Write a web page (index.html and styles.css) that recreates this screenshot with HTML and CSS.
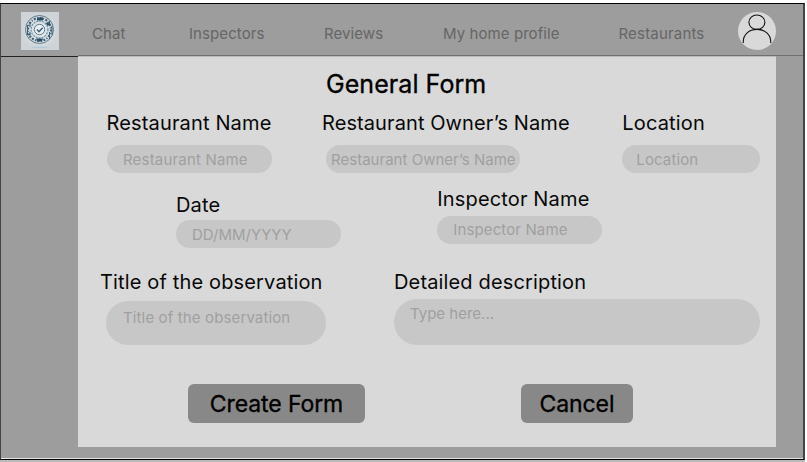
FILE: index.html
```html
<!DOCTYPE html>
<html lang="en">
<head>
<meta charset="utf-8">
<title>General Form</title>
<link rel="stylesheet" href="styles.css">
</head>
<body>
<div class="frame">
  <header class="topbar">
    <svg class="logo" viewBox="0 0 38 38">
      <defs><radialGradient id="g"><stop offset="0" stop-color="#e6ecee"/><stop offset="1" stop-color="#cdd3d6"/></radialGradient></defs>
      <rect width="38" height="38" fill="url(#g)"/>
      <ellipse cx="19" cy="35.3" rx="9" ry=".8" fill="#b3cbd9"/>
      <g fill="none" stroke="#3d6077">
        <circle cx="18.500" cy="17.500" r="14" stroke-width=".8"/>
        <circle cx="18.500" cy="17.500" r="11.500" stroke-width="2.200" stroke-dasharray="2 1.500 1 1.500"/>
        <circle cx="18.500" cy="17.500" r="8.400" stroke-width="1.200" stroke="#6b8fa5" stroke-dasharray="2 1"/>
        <circle cx="18.500" cy="17.500" r="5.200" stroke-width=".8" fill="#e8eff2"/>
        <path d="M6.500 13v10M9 10v5M9 20v6M28.500 9v5M31 14v9M28.500 20v7" stroke-width="1"/>
        <path d="M16 17.500l2 2.200 3.700-4" stroke-width="1.500"/>
      </g>
      <path d="M16 5.500h6v3h-6zM15 26.500h7l-1 3h-5zM26 10l3 2-2 2-2-2z" fill="#2a4e66"/>
    </svg>
    <nav class="nav">
      <a class="chat">Chat</a>
      <a class="inspectors">Inspectors</a>
      <a class="reviews">Reviews</a>
      <a class="profile">My home profile</a>
      <a class="restaurants">Restaurants</a>
    </nav>
    <svg class="avatar" viewBox="0 0 38 38">
      <circle cx="19" cy="19" r="19" fill="#d9d9d9"/>
      <g fill="none" stroke="#111" stroke-width="1.1">
        <ellipse cx="18.9" cy="10.2" rx="8" ry="7.2"/>
        <path d="M5.3 31v-1.500C5.300 22.500 11 17.400 19 17.400s13.700 5.100 13.700 12.100V31"/>
      </g>
    </svg>
  </header>
  <main class="panel">
    <h1>General Form</h1>
    <form>
      <div class="row row-one">
        <div class="field restaurant"><label>Restaurant Name</label><div class="input"><span>Restaurant Name</span></div></div>
        <div class="field owner"><label>Restaurant Owner’s Name</label><div class="input"><span>Restaurant Owner’s Name</span></div></div>
        <div class="field location"><label>Location</label><div class="input"><span>Location</span></div></div>
      </div>
      <div class="row row-two">
        <div class="field date"><label>Date</label><div class="input"><span>DD/MM/YYYY</span></div></div>
        <div class="field inspector"><label>Inspector Name</label><div class="input"><span>Inspector Name</span></div></div>
      </div>
      <div class="row row-three">
        <div class="field observation"><label>Title of the observation</label><div class="input"><span>Title of the observation</span></div></div>
        <div class="field description"><label>Detailed description</label><div class="input"><span>Type here...</span></div></div>
      </div>
      <div class="actions">
        <button type="button" class="create">Create Form</button>
        <button type="button" class="cancel">Cancel</button>
      </div>
    </form>
  </main>
</div>
</body>
</html>
```
FILE: styles.css
```css
* { box-sizing: border-box; }
body { margin: 0; padding-top: 3px; height: 462px; overflow: hidden; background: #fff; font-family: Inter, sans-serif; color: #000; }
.frame { width: 805px; height: 457px; background: #9d9d9d; border-top: 1px solid #000; border-left: 1px solid #444; border-right: 2px solid #444; border-bottom: 1px solid #000; box-shadow: inset 0 -1px #e4e4e4, 0 2px #bbb; }
.topbar { display: flex; align-items: flex-start; height: 53px; background: linear-gradient(#222, #222) 0 52px / 77px 1px no-repeat, linear-gradient(#707070, #707070) 77px 51px / 100% 1px no-repeat; }
.logo { width: 38px; height: 38px; margin: 8px 0 0 20px; flex: none; }
.nav { display: flex; width: 679px; height: 50px; flex: none; font-size: 15px; line-height: 20px; letter-spacing: .08px; color: #666; }
.nav a { margin-top: 20px; white-space: nowrap; flex: none; }
.chat { width: 97px; margin-left: 33px; }
.inspectors { width: 135px; }
.reviews { width: 119px; }
.profile { width: 175.5px; }
.restaurants { letter-spacing: .18px; }
.avatar { width: 38px; height: 38px; margin-top: 8px; flex: none; }
.panel { width: 698px; height: 391px; margin: -1px 0 0 77px; background: #d9d9d9; border-top: 1px solid #bbb; overflow: hidden; }
h1 { margin: 12px 0 0 248px; font-size: 25px; font-weight: 400; -webkit-text-stroke: .35px #000; letter-spacing: .06px; line-height: 30px; height: 30px; }
.row { display: flex; }
.field { flex: none; white-space: nowrap; }
label { display: block; font-size: 20px; line-height: 24px; height: 24px; letter-spacing: .15px; color: #080808; }
.input { height: 28px; border-radius: 23px; background: #c7c7c7; color: #a0a0a0; font-size: 15px; line-height: 28px; letter-spacing: .12px; padding-left: 16px; }
.row-one { height: 75px; padding: 12px 0 0 28.5px; }
.row-one .input { margin-top: 10px; line-height: 29px; }
.restaurant { width: 215.5px; }
.restaurant .input { width: 165px; padding-left: 16.5px; letter-spacing: .18px; }
.owner { width: 300.3px; }
.owner label { letter-spacing: .09px; }
.owner .input { width: 194px; margin-left: 4px; padding-left: 5px; letter-spacing: .02px; }
.location .input { width: 137.5px; padding-left: 14px; }
.row-two { height: 83px; padding: 13px 0 0 98px; }
.date { width: 261.3px; padding-top: 6px; }
.date .input { width: 165px; margin-top: 3px; line-height: 30px; letter-spacing: 0; }
.inspector .input { width: 164.5px; margin-top: 5px; }
.row-three { height: 127px; padding: 13px 0 0 22px; }
.observation { width: 294px; }
.observation .input { width: 220px; height: 44px; margin: 7px 0 0 6px; line-height: 34px; padding-left: 17px; letter-spacing: .13px; }
.description .input { width: 366.3px; height: 46px; margin-top: 5px; line-height: 29px; letter-spacing: 0; }
.actions { display: flex; gap: 156px; padding-left: 110px; }
button { height: 39px; padding: 2px 0 0; border: 0; border-radius: 6px; background: #888; color: #000; font: 400 23px/37px Inter, sans-serif; letter-spacing: -.1px; -webkit-text-stroke: .35px #000; }
.create { width: 177px; }
.cancel { width: 112px; }
```
